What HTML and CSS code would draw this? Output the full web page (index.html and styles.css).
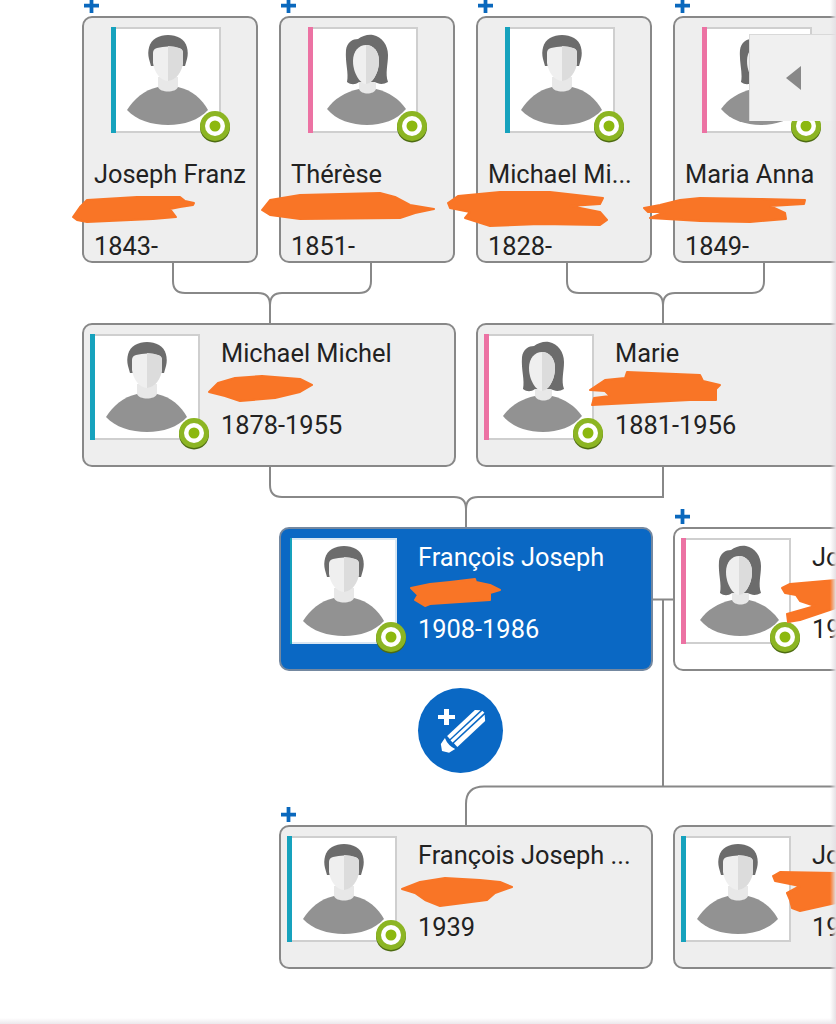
FILE: index.html
```html
<!DOCTYPE html>
<html lang="fr">
<head>
<meta charset="utf-8">
<title>Arbre</title>
<link rel="stylesheet" href="styles.css">
</head>
<body>
<svg class="defs" width="0" height="0" aria-hidden="true">
  <symbol id="male" viewBox="5 0 105 106">
    <path d="M16 83C23 72 33 63 47 60L67 60C81 63 91 72 97 83C88 93 73 98 57 98C41 98 25 93 16 83Z" fill="#929292"/>
    <path d="M47 50L67 50L67 60C65 66 49 66 47 60Z" fill="#e8e8e8"/>
    <path d="M38 32C36 24 38 15 45 11C52 7 62 7 69 11C76 15 78 24 76 32L74 39L70 39L44 39L40 39Z" fill="#6c6c6c"/>
    <path d="M42 26Q42 22 46 21Q57 18 68 21Q72 22 72 26L72 36C71 44 65 54 57 54C49 54 43 44 42 36Z" fill="#efefef"/>
    <path d="M57 19Q63 19 68 21Q72 22 72 26L72 36C71 44 65 54 57 54Z" fill="#dcdcdc"/>
  </symbol>
  <symbol id="female" viewBox="5 0 105 106">
    <path d="M19 82C26 72 37 65 51 62L68 62C81 65 91 72 98 82C89 93 74 98 59 98C44 98 28 93 19 82Z" fill="#929292"/>
    <path d="M51 52L68 52L68 62C66 68 53 68 51 62Z" fill="#e8e8e8"/>
    <path d="M39 55C41 46 37 36 38 23C39 15 45 12 50 12C54 9 60 7 65 8C74 10 80 18 80 28C80 38 77 46 80 55C75 58 70 57 67 55L51 55C47 58 43 58 39 55Z" fill="#6c6c6c"/>
    <path d="M45 34C45 24 51 18 58 18C65 18 71 24 71 34C71 46 64 57 58 57C52 57 45 46 45 34Z" fill="#efefef"/>
    <path d="M58 18C65 18 71 24 71 34C71 46 64 57 58 57Z" fill="#dcdcdc"/>
  </symbol>
  <symbol id="badge" viewBox="0 0 32 34">
    <circle cx="16" cy="17.500" r="15" fill="#4d6b12"/>
    <circle cx="16" cy="16" r="15" fill="#8cb523"/>
    <circle cx="16" cy="16" r="10" fill="#fff"/>
    <circle cx="16" cy="16" r="5.500" fill="#8cb80f"/>
  </symbol>
  <symbol id="plus" viewBox="0 0 16 16">
    <path d="M6 0H10V6H16V10H10V16H6V10H0V6H6Z" fill="#0a68bd"/>
  </symbol>
</svg>

<main class="canvas">
  <svg class="links" width="836" height="1024" aria-hidden="true">
    <path d="M173 263V281Q173 293 185 293H258Q270 293 270 305V324M371 263V281Q371 293 359 293H282Q270 293 270 305"/>
    <path d="M567 263V281Q567 293 579 293H651Q663 293 663 305V324M764 263V281Q764 293 752 293H675Q663 293 663 305"/>
    <path d="M270 467V485Q270 497 282 497H454Q466 497 466 509V528M663 467V497H478Q466 497 466 509"/>
    <path d="M653 599.500H674M663 599.500V786.500M836 786.500H484Q466 786.500 466 804V826"/>
  </svg>

  <article class="card tall col-1">
    <div class="portrait"><span class="bar bar-m"></span><svg class="avatar"><use href="#male"/></svg><svg class="badge"><use href="#badge"/></svg></div>
    <div class="info"><p class="line">Joseph Franz</p><p class="line">&nbsp;</p><p class="line">1843-</p></div>
  </article>
  <article class="card tall col-2">
    <div class="portrait"><span class="bar bar-f"></span><svg class="avatar"><use href="#female"/></svg><svg class="badge"><use href="#badge"/></svg></div>
    <div class="info"><p class="line">Thérèse</p><p class="line">&nbsp;</p><p class="line">1851-</p></div>
  </article>
  <article class="card tall col-3">
    <div class="portrait"><span class="bar bar-m"></span><svg class="avatar"><use href="#male"/></svg><svg class="badge"><use href="#badge"/></svg></div>
    <div class="info"><p class="line">Michael Mi...</p><p class="line">&nbsp;</p><p class="line">1828-</p></div>
  </article>
  <article class="card tall col-4">
    <div class="portrait"><span class="bar bar-f"></span><svg class="avatar"><use href="#female"/></svg><svg class="badge"><use href="#badge"/></svg></div>
    <div class="info"><p class="line">Maria Anna</p><p class="line">&nbsp;</p><p class="line">1849-</p></div>
  </article>

  <article class="card wide row-2 col-1">
    <div class="portrait"><span class="bar bar-m"></span><svg class="avatar"><use href="#male"/></svg><svg class="badge"><use href="#badge"/></svg></div>
    <div class="info"><p class="line">Michael Michel</p><p class="line">&nbsp;</p><p class="line">1878-1955</p></div>
  </article>
  <article class="card wide row-2 col-3">
    <div class="portrait"><span class="bar bar-f"></span><svg class="avatar"><use href="#female"/></svg><svg class="badge"><use href="#badge"/></svg></div>
    <div class="info"><p class="line">Marie</p><p class="line">&nbsp;</p><p class="line">1881-1956</p></div>
  </article>

  <article class="card wide row-3 col-2 selected">
    <div class="portrait"><span class="bar bar-m"></span><svg class="avatar"><use href="#male"/></svg><svg class="badge"><use href="#badge"/></svg></div>
    <div class="info"><p class="line">François Joseph</p><p class="line">&nbsp;</p><p class="line">1908-1986</p></div>
  </article>
  <article class="card wide row-3 col-4 plain">
    <div class="portrait"><span class="bar bar-f"></span><svg class="avatar"><use href="#female"/></svg><svg class="badge"><use href="#badge"/></svg></div>
    <div class="info"><p class="line">Joséphine</p><p class="line">&nbsp;</p><p class="line">1912</p></div>
  </article>

  <article class="card wide row-4 col-2">
    <div class="portrait"><span class="bar bar-m"></span><svg class="avatar"><use href="#male"/></svg><svg class="badge"><use href="#badge"/></svg></div>
    <div class="info"><p class="line">François Joseph ...</p><p class="line">&nbsp;</p><p class="line">1939</p></div>
  </article>
  <article class="card wide row-4 col-4">
    <div class="portrait"><span class="bar bar-m"></span><svg class="avatar"><use href="#male"/></svg></div>
    <div class="info"><p class="line">Joseph</p><p class="line">&nbsp;</p><p class="line">1941</p></div>
  </article>

  <svg class="plus plus-a"><use href="#plus"/></svg>
  <svg class="plus plus-b"><use href="#plus"/></svg>
  <svg class="plus plus-c"><use href="#plus"/></svg>
  <svg class="plus plus-d"><use href="#plus"/></svg>
  <svg class="plus plus-e"><use href="#plus"/></svg>
  <svg class="plus plus-f"><use href="#plus"/></svg>

  <button class="fab" type="button" aria-label="Ajouter ou modifier">
    <svg width="85" height="85" viewBox="0 0 85 85" aria-hidden="true">
      <path d="M26 21H31V27H37V31H31V37H26V31H20V27H26Z" fill="#fff"/>
      <g transform="translate(24 63) rotate(-43)" fill="#fff">
        <path d="M0 0L4 -6L11 -7.500Q8 0 11 7.500L4 6Z"/>
        <path d="M14 -7.500H52L56 -3.500H14Z"/>
        <path d="M13.500 -2H57V1H13.500Z"/>
        <path d="M14 2.500H56L52 7.500H14Z"/>
      </g>
    </svg>
  </button>

  <aside class="toggle"><span class="arrow"></span></aside>

  <svg class="scribbles" width="836" height="1024" aria-hidden="true">
    <polygon points="73,217 80,207 87,200 137,197 180,197 185,201 194,203 193,205 180,207 170,209 176,217 153,219 87,222 77,220"/>
    <polygon points="262,210 270,200 300,195 380,193 395,197 410,205 434,209 415,213 400,218 300,219 270,215"/>
    <polygon points="448,203 458,196 500,192 550,192 603,198 600,204 570,206 600,212 607,220 600,225 540,224 490,226 465,218 470,212 450,208"/>
    <polygon points="644,208 660,205 680,200 700,198 760,199 805,200 804,204 770,206 785,213 786,219 750,222 700,221 650,218 665,212 648,212"/>
    <polygon points="209,392 218,383 235,378 262,376 300,379 312,385 300,392 275,398 240,401 225,396"/>
    <polygon points="590,390 605,380 625,378 627,372 700,375 703,381 720,385 716,389 716,400 690,400 592,405 594,398 610,396 605,391"/>
    <polygon points="411,588 430,584 450,582 475,579 476,582 490,585 500,590 490,593 490,600 430,604 425,606 415,600 418,595"/>
    <polygon points="782,588 790,584 836,580 836,608 800,620 788,622 787,614 815,606 800,601 796,595 785,593"/>
    <polygon points="402,889 420,882 445,878 480,880 500,882 512,887 495,893 487,900 440,906 425,900 415,893"/>
    <polygon points="773,876 780,872 836,873 836,903 800,911 792,908 790,900 787,893 800,886 775,881"/>
  </svg>
  <div class="edge-right"></div>
  <div class="edge-bottom"></div>
</main>
</body>
</html>
```
FILE: styles.css
```css
* { box-sizing: border-box; }
html, body { margin: 0; padding: 0; background: #fff; }
.defs { position: absolute; }
.canvas {
  position: relative;
  width: 836px;
  height: 1024px;
  overflow: hidden;
  background: #fff;
  font-family: Roboto, "Liberation Sans", sans-serif;
  color: #222;
}
.links { position: absolute; left: 0; top: 0; }
.links path { fill: none; stroke: #888; stroke-width: 2; }

.card {
  position: absolute;
  border: 2px solid #888;
  border-radius: 10px;
  background: #eee;
  display: flex;
}
.tall { top: 16px; width: 176px; height: 247px; flex-direction: column; padding: 9px 0 0 27px; }
.wide { width: 374px; height: 144px; padding: 9px 0 0 6px; gap: 21px; }
.col-1 { left: 82px; }
.col-2 { left: 279px; }
.col-3 { left: 476px; }
.col-4 { left: 673px; }
.row-2 { top: 323px; }
.row-3 { top: 527px; }
.row-4 { top: 825px; }

.portrait {
  position: relative;
  flex: none;
  display: flex;
  width: 110px;
  height: 106px;
}
.bar { flex: none; width: 5px; height: 106px; }
.bar-m { background: #16a2bd; }
.bar-f { background: #ec72a3; }
.avatar {
  flex: none;
  width: 105px;
  height: 106px;
  background: #fff;
  box-shadow: inset 0 2px 0 #cfcfcf, inset -2px 0 0 #cfcfcf, inset 0 -2px 0 #cfcfcf;
  filter: blur(0.4px);
}
.badge { position: absolute; left: 88px; top: 83px; width: 32px; height: 34px; }

.info { min-width: 0; }
.tall .info { margin: 23px 0 0 -17px; width: 153px; }
.wide .info { width: 222px; margin-top: 1px; }
.line {
  margin: 0;
  height: 36px;
  font-size: 25.4px;
  line-height: 36px;
  white-space: nowrap;
  overflow: hidden;
}

.selected { background: #0a68c4; border-color: #7488a0; color: #fff; }
.selected .bar { width: 2px; margin-left: 3px; }
.selected .avatar { box-shadow: inset 0 2px 0 #d8e6f2, inset -2px 0 0 #d8e6f2, inset 0 -2px 0 #d8e6f2; }
.plain { background: #fff; }

.plus { position: absolute; width: 15px; height: 15px; }
.plus-a { left: 84px; top: -2px; }
.plus-b { left: 281px; top: -2px; }
.plus-c { left: 478px; top: -2px; }
.plus-d { left: 675px; top: -2px; }
.plus-e { left: 675px; top: 509px; }
.plus-f { left: 281px; top: 807px; }

.fab {
  position: absolute;
  left: 418px;
  top: 688px;
  width: 85px;
  height: 85px;
  padding: 0;
  border: 0;
  border-radius: 50%;
  background: #0a68c4;
}
.fab svg { display: block; }

.toggle {
  position: absolute;
  left: 749px;
  top: 34px;
  width: 87px;
  height: 87px;
  background: #f0f0f0;
  border-top: 1px solid #d9d9d9;
  border-left: 1px solid #d9d9d9;
  display: flex;
  align-items: center;
  justify-content: center;
}
.arrow {
  width: 0;
  height: 0;
  border-style: solid;
  border-width: 12.500px 15px 12.500px 0;
  border-color: transparent #888 transparent transparent;
}

.scribbles { position: absolute; left: 0; top: 0; }
.scribbles polygon { fill: #f97526; stroke: #f97526; stroke-width: 2; stroke-linejoin: round; }

.edge-right {
  position: absolute;
  right: 0;
  top: 0;
  width: 6px;
  height: 100%;
  background: linear-gradient(to right, rgba(226, 222, 226, 0), #e4e0e4);
}
.edge-bottom {
  position: absolute;
  left: 0;
  bottom: 0;
  width: 100%;
  height: 6px;
  background: linear-gradient(to bottom, rgba(236, 232, 236, 0), #ece8ec);
}
```
